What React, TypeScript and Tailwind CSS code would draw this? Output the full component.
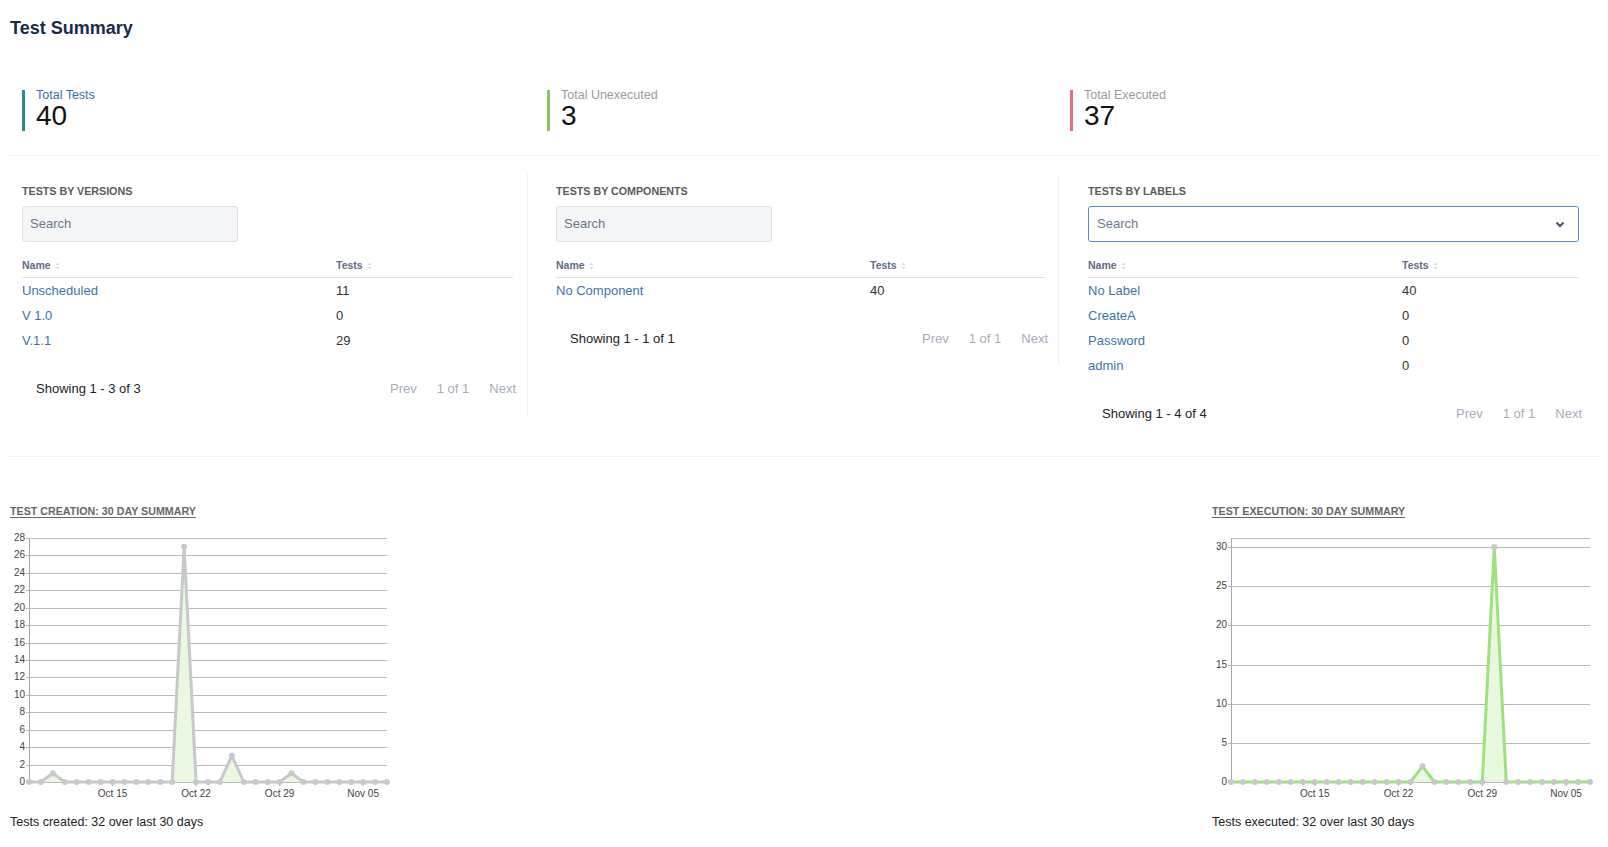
import React from "react";

const created = [0, 0, 1, 0, 0, 0, 0, 0, 0, 0, 0, 0, 0, 27, 0, 0, 0, 3, 0, 0, 0, 0, 1, 0, 0, 0, 0, 0, 0, 0, 0];
const executed = [0, 0, 0, 0, 0, 0, 0, 0, 0, 0, 0, 0, 0, 0, 0, 0, 2, 0, 0, 0, 0, 0, 30, 0, 0, 0, 0, 0, 0, 0, 0];
const dateLabels: [number, string][] = [
  [7, "Oct 15"],
  [14, "Oct 22"],
  [21, "Oct 29"],
  [28, "Nov 05"],
];

type Row = { name: string; tests: number };

function SortIcon() {
  return (
    <svg width="5" height="8" viewBox="0 0 5 8" className="ml-[4px]">
      <polygon points="2.5,0.5 4.5,3 0.5,3" fill="#d3d8de" />
      <polygon points="0.5,5 4.5,5 2.5,7.5" fill="#d3d8de" />
    </svg>
  );
}

function Stat({ label, value, bar, labelColor }: { label: string; value: number; bar: string; labelColor: string }) {
  return (
    <div className={`flex h-[41px] border-l-[3px] pl-[11px] ${bar}`}>
      <div className="flex flex-col">
        <span className={`text-[12.5px] leading-[11px] ${labelColor}`}>{label}</span>
        <span className="text-[28px] leading-[30px] text-[#111]">{value}</span>
      </div>
    </div>
  );
}

function Panel({
  title,
  rows,
  showing,
  dropdown,
}: {
  title: string;
  rows: Row[];
  showing: string;
  dropdown?: boolean;
}) {
  return (
    <div className="pt-[9px] pb-[14px]">
      <div className="text-[10.7px] font-bold uppercase leading-[16px] text-[#5a5a5a]">{title}</div>
      {dropdown ? (
        <div className="mt-[7px] flex h-[36px] w-full items-center justify-between rounded-[3px] border border-[#5b8dc8] bg-white pl-[8px] pr-[13px]">
          <span className="text-[13px] text-[#6b778c]">Search</span>
          <svg width="10" height="7" viewBox="0 0 10 7">
            <path d="M1.5 1.5 L5 5 L8.5 1.5" fill="none" stroke="#42526e" strokeWidth="2" />
          </svg>
        </div>
      ) : (
        <div className="mt-[7px] flex h-[36px] w-[216px] items-center rounded-[3px] border border-[#dfe1e6] bg-[#f4f5f7] pl-[7px]">
          <span className="text-[13px] text-[#6b778c]">Search</span>
        </div>
      )}
      <div className="mt-[12px]">
        <div className="grid h-[24px] grid-cols-[314px_1fr] items-center border-b border-[#dfe1e6] text-[10.5px] font-bold text-[#5e6c84]">
          <span className="flex items-center">
            Name
            <SortIcon />
          </span>
          <span className="flex items-center">
            Tests
            <SortIcon />
          </span>
        </div>
        {rows.map((r) => (
          <div key={r.name} className="grid h-[25px] grid-cols-[314px_1fr] items-center text-[13px]">
            <span className="text-[#3b73af]">{r.name}</span>
            <span className="text-[#333]">{r.tests}</span>
          </div>
        ))}
      </div>
      <div className="-mr-[3px] mt-[24px] flex h-[24px] items-center justify-between pl-[14px] text-[13px]">
        <span className="text-[#222]">{showing}</span>
        <div className="flex gap-[20px] text-[#a5adba]">
          <span>Prev</span>
          <span>1 of 1</span>
          <span>Next</span>
        </div>
      </div>
    </div>
  );
}

function LineChart({
  data,
  ticks,
  unit,
  x1,
  line,
  dot,
  fill,
  frame,
}: {
  data: number[];
  ticks: number[];
  unit: number;
  x1: number;
  line: string;
  dot: string;
  fill: string;
  frame?: boolean;
}) {
  const x0 = 19;
  const y0 = 252;
  const dx = (x1 - x0) / (data.length - 1);
  const pts = data.map((v, i) => [x0 + i * dx, y0 - v * unit]);
  const path = pts.map((p, i) => `${i ? "L" : "M"}${p[0].toFixed(2)},${p[1].toFixed(2)}`).join(" ");
  const area = `${path} L${x1},${y0} L${x0},${y0} Z`;
  return (
    <svg width={x1 + 4} height="272" className="block">
      {frame && <line x1={x0} y1={8.5} x2={x1} y2={8.5} stroke="#b8b8b8" strokeWidth="1" />}
      {ticks.map((t) => {
        const y = Math.round(y0 - t * unit) + 0.5;
        return (
          <g key={t}>
            <line x1={x0 - 3} y1={y} x2={x1} y2={y} stroke="#b8b8b8" strokeWidth="1" />
            <text
              x={15}
              y={y}
              textAnchor="end"
              dominantBaseline="middle"
              fontSize="10"
              fill="#444"
              fontFamily="'Liberation Sans', Arial, sans-serif"
            >
              {t}
            </text>
          </g>
        );
      })}
      <line x1={x0 + 0.5} y1={8} x2={x0 + 0.5} y2={y0} stroke="#a8a8a8" strokeWidth="1" />
      {dateLabels.map(([i, l]) => (
        <g key={l}>
          <line x1={x0 + i * dx} y1={y0} x2={x0 + i * dx} y2={y0 + 4} stroke="#a8a8a8" strokeWidth="1" />
          <text
            x={x0 + i * dx}
            y={264}
            textAnchor="middle"
            dominantBaseline="middle"
            fontSize="10"
            fill="#444"
            fontFamily="'Liberation Sans', Arial, sans-serif"
          >
            {l}
          </text>
        </g>
      ))}
      <path d={area} fill={fill} />
      <path d={path} fill="none" stroke={line} strokeWidth="3" strokeLinejoin="round" />
      {pts.map((p, i) => (
        <circle key={i} cx={p[0]} cy={p[1]} r="3" fill={dot} />
      ))}
    </svg>
  );
}

export default function App() {
  return (
    <div className="min-h-screen w-[1608px] bg-white font-['Liberation_Sans',Arial,sans-serif] text-[#333]">
      <div className="px-2">
        <h1 className="pl-[2px] pt-[17px] text-[18px] font-bold leading-[22px] text-[#172b4d]">Test Summary</h1>

        {/* Totals */}
        <div className="mt-[51px] flex pl-[14px]">
          <div className="w-[525px]">
            <Stat label="Total Tests" value={40} bar="border-[#2a8a8c]" labelColor="text-[#3b6ea5]" />
          </div>
          <div className="w-[523px]">
            <Stat label="Total Unexecuted" value={3} bar="border-[#8cc263]" labelColor="text-[#9a9a9a]" />
          </div>
          <div className="flex-1">
            <Stat label="Total Executed" value={37} bar="border-[#e1707a]" labelColor="text-[#9a9a9a]" />
          </div>
        </div>

        <div className="mt-[24px] h-px bg-[#f0f1f2]" />

        {/* Breakdown tables */}
        <div className="mt-[18px] flex items-start">
          <div className="w-[520px] border-r border-[#eeeff1] pl-[14px] pr-[14px]">
            <Panel
              title="Tests by versions"
              rows={[
                { name: "Unscheduled", tests: 11 },
                { name: "V 1.0", tests: 0 },
                { name: "V.1.1", tests: 29 },
              ]}
              showing="Showing 1 - 3 of 3"
            />
          </div>
          <div className="w-[531px] border-r border-[#eeeff1] pl-[28px] pr-[13px]">
            <Panel title="Tests by components" rows={[{ name: "No Component", tests: 40 }]} showing="Showing 1 - 1 of 1" />
          </div>
          <div className="flex-1 pl-[29px] pr-[21px]">
            <Panel
              title="Tests by labels"
              dropdown
              rows={[
                { name: "No Label", tests: 40 },
                { name: "CreateA", tests: 0 },
                { name: "Password", tests: 0 },
                { name: "admin", tests: 0 },
              ]}
              showing="Showing 1 - 4 of 4"
            />
          </div>
        </div>

        <div className="mt-[16px] h-px bg-[#f0f1f2]" />

        {/* 30 day charts */}
        <div className="mt-[46px] flex justify-between pl-[2px]">
          <div className="w-[390px]">
            <div className="text-[10.7px] font-bold uppercase leading-[16px] text-[#666] underline underline-offset-[2px]">
              Test Creation: 30 Day Summary
            </div>
            <div className="mt-[11px]">
              <LineChart
                data={created}
                ticks={[0, 2, 4, 6, 8, 10, 12, 14, 16, 18, 20, 22, 24, 26, 28]}
                unit={244 / 28}
                x1={377}
                line="#c5c9c9"
                dot="#c5c9c9"
                fill="#eaf8e1"
              />
            </div>
            <div className="mt-[10px] text-[12.5px] leading-[20px] text-[#222]">Tests created: 32 over last 30 days</div>
          </div>
          <div className="w-[388px]">
            <div className="text-[10.7px] font-bold uppercase leading-[16px] text-[#666] underline underline-offset-[2px]">
              Test Execution: 30 Day Summary
            </div>
            <div className="mt-[11px]">
              <LineChart
                data={executed}
                ticks={[0, 5, 10, 15, 20, 25, 30]}
                unit={235 / 30}
                x1={378}
                line="#9de27e"
                dot="#c8c8c8"
                fill="#e8f8de"
                frame
              />
            </div>
            <div className="mt-[10px] text-[12.5px] leading-[20px] text-[#222]">Tests executed: 32 over last 30 days</div>
          </div>
        </div>
      </div>
    </div>
  );
}
